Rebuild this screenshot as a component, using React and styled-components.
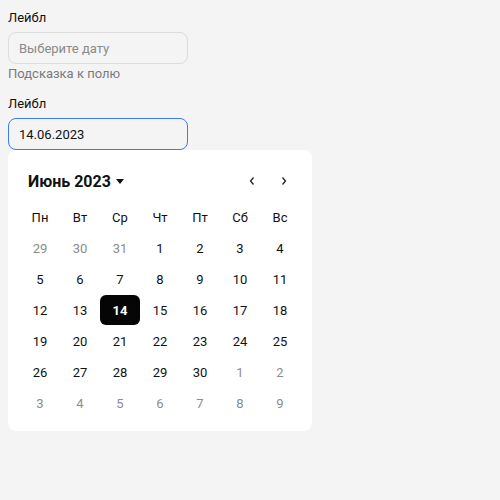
import styled, { createGlobalStyle } from "styled-components";

const GlobalStyle = createGlobalStyle`
    body {
        margin: 0;
        background: #f4f4f4;
        font-family: Roboto, "Noto Sans", sans-serif;
        color: #111;
    }
`;

const weekDays = ['Пн', 'Вт', 'Ср', 'Чт', 'Пт', 'Сб', 'Вс']

const buildDays = () => {
    const days = []
    for (let d = 29; d <= 31; d++) days.push({ day: d, muted: true })
    for (let d = 1; d <= 30; d++) days.push({ day: d, muted: false, selected: d === 14 })
    for (let d = 1; d <= 9; d++) days.push({ day: d, muted: true })
    return days
}

const App = () => {
    const days = buildDays()

    return (
        <Page>
            <GlobalStyle />
            <Field>
                <Label>Лейбл</Label>
                <Input placeholder="Выберите дату" readOnly />
                <Hint>Подсказка к полю</Hint>
            </Field>
            <Field $spaced>
                <Label>Лейбл</Label>
                <Input value="14.06.2023" $focused readOnly />
                <Calendar>
                    <Header>
                        <MonthButton>
                            Июнь 2023
                            <Caret />
                        </MonthButton>
                        <Arrows>
                            <ArrowButton>
                                <svg width="8" height="10" viewBox="0 0 8 10">
                                    <path d="M5.5 1.5 L2.5 5 L5.5 8.5" fill="none" stroke="#222" strokeWidth="1.3" />
                                </svg>
                            </ArrowButton>
                            <ArrowButton>
                                <svg width="8" height="10" viewBox="0 0 8 10">
                                    <path d="M2.5 1.5 L5.5 5 L2.5 8.5" fill="none" stroke="#222" strokeWidth="1.3" />
                                </svg>
                            </ArrowButton>
                        </Arrows>
                    </Header>
                    <Grid>
                        {weekDays.map(w => <WeekDay key={w}>{w}</WeekDay>)}
                        {days.map((d, i) => (
                            <Day key={i} $muted={d.muted} $selected={d.selected}>{d.day}</Day>
                        ))}
                    </Grid>
                </Calendar>
            </Field>
        </Page>
    )
}

export default App

const Page = styled.div`
    padding: 8px;
    width: 304px;
`;

const Field = styled.div`
    display: flex;
    flex-direction: column;
    margin-top: ${({ $spaced }) => $spaced ? '10px' : '0'};
`;

const Label = styled.div`
    font-size: 13px;
    line-height: 20px;
    margin-bottom: 4px;
    color: #111;
`;

const Input = styled.input`
    box-sizing: border-box;
    width: 180px;
    height: 32px;
    padding: 0 10px;
    border-radius: 8px;
    border: 1px solid ${({ $focused }) => $focused ? '#3b7cf2' : '#dcdcdc'};
    background: #f4f4f4;
    font-family: inherit;
    font-size: 13px;
    color: #111;
    outline: none;
    caret-color: #111;

    &::placeholder {
        color: #8a8a8a;
    }
`;

const Hint = styled.div`
    font-size: 13px;
    line-height: 20px;
    color: #7a7a7a;
`;

const Calendar = styled.div`
    box-sizing: border-box;
    width: 304px;
    background: #fff;
    border-radius: 8px;
    padding: 16px 12px 12px;
`;

const Header = styled.div`
    display: flex;
    align-items: center;
    justify-content: space-between;
    height: 30px;
    margin-bottom: 6px;
    padding-left: 8px;
`;

const MonthButton = styled.div`
    display: flex;
    align-items: center;
    gap: 5px;
    font-size: 16px;
    font-weight: 700;
    color: #111;
`;

const Caret = styled.span`
    width: 0;
    height: 0;
    border-left: 4px solid transparent;
    border-right: 4px solid transparent;
    border-top: 5px solid #111;
    margin-top: 1px;
`;

const Arrows = styled.div`
    display: flex;
`;

const ArrowButton = styled.div`
    width: 32px;
    height: 30px;
    display: flex;
    align-items: center;
    justify-content: center;
`;

const Grid = styled.div`
    display: grid;
    grid-template-columns: repeat(7, 40px);
    grid-auto-rows: 31px;
`;

const WeekDay = styled.div`
    display: flex;
    align-items: center;
    justify-content: center;
    font-size: 13px;
    color: #111;
`;

const Day = styled.div`
    display: flex;
    align-items: center;
    justify-content: center;
    height: 30px;
    border-radius: 6px;
    font-size: 13px;
    font-weight: ${({ $selected }) => $selected ? 700 : 400};
    color: ${({ $muted, $selected }) => $selected ? '#fff' : $muted ? '#8c8c8c' : '#111'};
    background: ${({ $selected }) => $selected ? '#050505' : 'transparent'};
`;
